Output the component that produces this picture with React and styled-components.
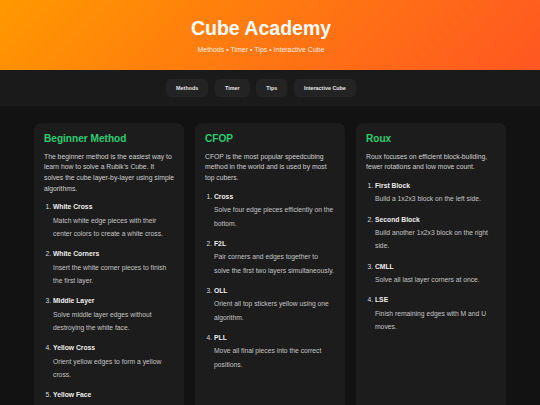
import React from "react";
import styled, { createGlobalStyle } from "styled-components";

const GlobalStyle = createGlobalStyle`
  * { box-sizing: border-box; }
  html, body {
    margin: 0;
    padding: 0;
    background: #121212;
    font-family: "Liberation Sans", Arial, sans-serif;
    color: #ddd;
  }
`;

const Header = styled.header`
  height: 70px;
  padding-right: 18px;
  background: linear-gradient(135deg, #ff9800, #ff5722);
  display: flex;
  flex-direction: column;
  align-items: center;
  justify-content: center;
  color: #fff;
`;

const Title = styled.h1`
  margin: 0 0 5px;
  font-size: 19.5px;
  font-weight: 700;
  line-height: 1.2;
`;

const Subtitle = styled.p`
  margin: 0;
  font-size: 7px;
  color: rgba(255, 255, 255, 0.9);
`;

const Nav = styled.nav`
  height: 36px;
  padding-right: 18px;
  background: #1a1a1a;
  display: flex;
  justify-content: center;
  align-items: center;
  gap: 6.7px;
`;

const NavButton = styled.button`
  height: 18.3px;
  padding: 0 10px;
  border: none;
  border-radius: 5px;
  background: #232323;
  color: #e6e6e6;
  font-family: inherit;
  font-size: 5.4px;
  font-weight: 700;
  cursor: pointer;
`;

const Main = styled.main`
  display: grid;
  grid-template-columns: repeat(3, 150px);
  justify-content: center;
  gap: 11px;
  padding: 17px 34px;
`;

const Card = styled.section`
  background: #1c1c1c;
  border-radius: 7px;
  padding: 10px 10px 14px;
`;

const CardTitle = styled.h2`
  margin: 0 0 6.6px;
  font-size: 10.1px;
  line-height: 12px;
  font-weight: 700;
  color: #2ecc71;
`;

const Intro = styled.p`
  margin: 0 0 6px;
  font-size: 6.8px;
  line-height: 10.7px;
  color: #cfcfcf;
`;

const Steps = styled.ol`
  margin: 0;
  padding-left: 9px;
  font-size: 6.75px;
  line-height: 13.4px;
  color: #d8d8d8;
`;

const Step = styled.li`
  margin-bottom: 6.8px;
`;

const StepName = styled.strong`
  display: block;
  color: #eeeeee;
`;

const StepText = styled.span`
  display: block;
  color: #c4c4c4;
`;

const methods = [
  {
    name: "Beginner Method",
    intro:
      "The beginner method is the easiest way to learn how to solve a Rubik’s Cube. It solves the cube layer-by-layer using simple algorithms.",
    steps: [
      ["White Cross", "Match white edge pieces with their center colors to create a white cross."],
      ["White Corners", "Insert the white corner pieces to finish the first layer."],
      ["Middle Layer", "Solve middle layer edges without destroying the white face."],
      ["Yellow Cross", "Orient yellow edges to form a yellow cross."],
      ["Yellow Face", "Orient all yellow corners so the top face is fully yellow."],
    ],
  },
  {
    name: "CFOP",
    intro:
      "CFOP is the most popular speedcubing method in the world and is used by most top cubers.",
    steps: [
      ["Cross", "Solve four edge pieces efficiently on the bottom."],
      ["F2L", "Pair corners and edges together to solve the first two layers simultaneously."],
      ["OLL", "Orient all top stickers yellow using one algorithm."],
      ["PLL", "Move all final pieces into the correct positions."],
    ],
  },
  {
    name: "Roux",
    intro:
      "Roux focuses on efficient block-building, fewer rotations and low move count.",
    steps: [
      ["First Block", "Build a 1x2x3 block on the left side."],
      ["Second Block", "Build another 1x2x3 block on the right side."],
      ["CMLL", "Solve all last layer corners at once."],
      ["LSE", "Finish remaining edges with M and U moves."],
    ],
  },
];

export default function App() {
  return (
    <>
      <GlobalStyle />
      <Header>
        <Title>Cube Academy</Title>
        <Subtitle>Methods • Timer • Tips • Interactive Cube</Subtitle>
      </Header>
      <Nav>
        <NavButton>Methods</NavButton>
        <NavButton>Timer</NavButton>
        <NavButton>Tips</NavButton>
        <NavButton>Interactive Cube</NavButton>
      </Nav>
      <Main>
        {methods.map((m) => (
          <Card key={m.name}>
            <CardTitle>{m.name}</CardTitle>
            <Intro>{m.intro}</Intro>
            <Steps>
              {m.steps.map(([name, text]) => (
                <Step key={name}>
                  <StepName>{name}</StepName>
                  <StepText>{text}</StepText>
                </Step>
              ))}
            </Steps>
          </Card>
        ))}
      </Main>
    </>
  );
}
